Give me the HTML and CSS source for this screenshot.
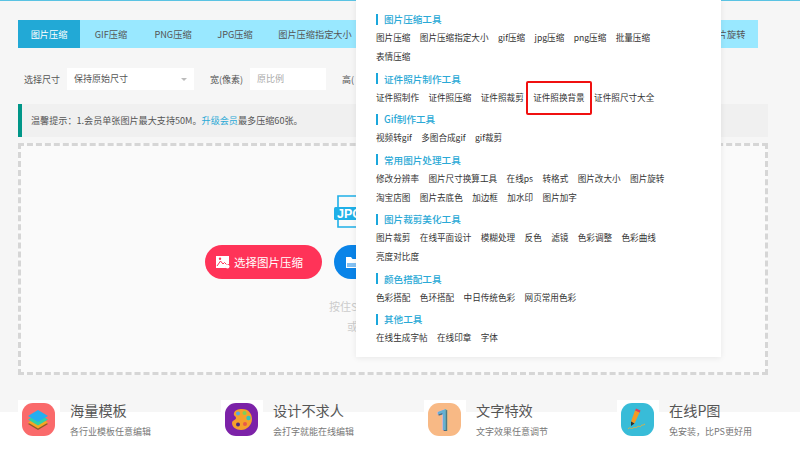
FILE: index.html
```html
<!DOCTYPE html>
<html lang="zh-CN">
<head>
  <meta charset="UTF-8">
  <title>图片压缩</title>
  <link rel="stylesheet" href="styles.css">
</head>
<body>
  <div class="main">
    <div class="tabs">
      <a class="tab active">图片压缩</a>
      <a class="tab">GIF压缩</a>
      <a class="tab">PNG压缩</a>
      <a class="tab">JPG压缩</a>
      <a class="tab tab-wide">图片压缩指定大小</a>
      <a class="tab tab-last">图片旋转</a>
    </div>

    <div class="form-row">
      <label class="form-label">选择尺寸</label>
      <div class="select">保持原始尺寸<i class="select-arrow"></i></div>
      <label class="form-label label-width">宽(像素)</label>
      <div class="input">原比例</div>
      <label class="form-label label-width">高(</label>
    </div>

    <div class="notice">温馨提示：1.会员单张图片最大支持50M。<a class="notice-link">升级会员</a>最多压缩60张。</div>

    <div class="drop">
      <div class="drop-inner">
        <svg class="drop-icon" width="40" height="33" viewBox="0 0 40 33">
          <path d="M4 12V1h22l5 5v26H4v-10" fill="none" stroke="#1fb0e8" stroke-width="1.6"/>
          <rect x="0" y="12" width="38" height="13" rx="1.5" fill="#1fb0e8"/>
          <text x="3" y="23" class="drop-icon-text">JPG</text>
        </svg>
        <div class="btn-row">
          <a class="pill pill-red">
            <svg width="14" height="14" viewBox="0 0 14 14">
              <path d="M0 1h13v8a3 3 0 0 0-3 4H0z" fill="#fff"/>
              <path d="M1 11l3.500-5 2.500 3 1.500-1.500 2 2" fill="none" stroke="#ff3358"/>
              <circle cx="4" cy="3.800" r="1.200" fill="#ff3358"/>
              <circle cx="11.500" cy="11.500" r="2" fill="#fff"/>
            </svg>
            选择图片压缩
          </a>
          <a class="pill pill-blue">
            <svg width="16" height="14" viewBox="0 0 16 14">
              <path d="M1 2h5l1.500 2H15v9H1z" fill="#fff"/>
              <path d="M2 9h12M2 11h12" stroke="#0a84e8"/>
            </svg>
          </a>
        </div>
        <p class="drop-tip tip-first">按住S</p>
        <p class="drop-tip tip-second">或</p>
      </div>
    </div>
  </div>

  <div class="features">
    <div class="feature">
      <div class="feature-icon">
        <svg width="33" height="34" viewBox="0 0 33 34">
          <rect width="33" height="33" rx="11" fill="#fa6a6b"/>
          <path d="M16 15l10 6-10 6-10-6z" fill="#8a5a2a"/>
          <path d="M16 13.500l10 6-10 6-10-6z" fill="#f5a623"/>
          <path d="M16 10.500l10 6-10 6-10-6z" fill="#2fd0a8"/>
          <path d="M16 7l10 6-10 6-10-6z" fill="#23aef0"/>
        </svg>
      </div>
      <div>
        <div class="feature-title">海量模板</div>
        <div class="feature-desc">各行业模板任意编辑</div>
      </div>
    </div>
    <div class="feature">
      <div class="feature-icon">
        <svg width="33" height="34" viewBox="0 0 33 34">
          <rect width="33" height="33" rx="11" fill="#7c22a8"/>
          <path d="M17 6c7 0 10 5 10 10 0 6-5 11-11 11-5 0-9-3-9-7 0-3 4-3 4-5 0-2-3-2-2-5 1-3 4-4 8-4z" fill="#f5a02c"/>
          <circle cx="13" cy="10.500" r="2" fill="#5aa8e0"/>
          <circle cx="19.500" cy="10" r="2" fill="#7ccf5a"/>
          <circle cx="23.500" cy="15" r="2.200" fill="#2fc4c0"/>
          <circle cx="13" cy="21.500" r="2" fill="#4a2a80"/>
          <circle cx="20" cy="21" r="2" fill="#e8584a"/>
        </svg>
      </div>
      <div>
        <div class="feature-title">设计不求人</div>
        <div class="feature-desc">会打字就能在线编辑</div>
      </div>
    </div>
    <div class="feature">
      <div class="feature-icon">
        <svg class="icon-open" width="33" height="34" viewBox="0 0 33 34">
          <rect width="33" height="33" rx="11" fill="#f8b985"/>
          <text x="8" y="28" class="one one-shadow">1</text>
          <text x="7" y="27" class="one">1</text>
        </svg>
      </div>
      <div>
        <div class="feature-title">文字特效</div>
        <div class="feature-desc">文字效果任意调节</div>
      </div>
    </div>
    <div class="feature">
      <div class="feature-icon">
        <svg width="33" height="34" viewBox="0 0 33 34">
          <rect width="33" height="33" rx="11" fill="#38bcd8"/>
          <path d="M15 5.500l4.500 2-1 2.500-4.500-2z" fill="#e0405a"/>
          <path d="M14 7.500l4.500 2-5 11-3.500-2z" fill="#f59a23"/>
          <path d="M10 18.500l3.500 2-3.500 2.500z" fill="#33302c"/>
          <path d="M7 26c2-3 3 1 5-1s2 1 4-1 3 1 4-1 2 0 4-2" fill="none" stroke="#d8b24a"/>
        </svg>
      </div>
      <div>
        <div class="feature-title">在线P图</div>
        <div class="feature-desc">免安装，比PS更好用</div>
      </div>
    </div>
  </div>

  <div class="menu">
    <div class="menu-group">
      <div class="menu-title">图片压缩工具</div>
      <div class="menu-links">
        <a>图片压缩</a><a>图片压缩指定大小</a><a>gif压缩</a><a>jpg压缩</a><a>png压缩</a><a>批量压缩</a><a>表情压缩</a>
      </div>
    </div>
    <div class="menu-group">
      <div class="menu-title">证件照片制作工具</div>
      <div class="menu-links">
        <a>证件照制作</a><a>证件照压缩</a><a>证件照裁剪</a><a class="marked">证件照换背景</a><a>证件照尺寸大全</a>
      </div>
    </div>
    <div class="menu-group">
      <div class="menu-title">Gif制作工具</div>
      <div class="menu-links">
        <a>视频转gif</a><a>多图合成gif</a><a>gif裁剪</a>
      </div>
    </div>
    <div class="menu-group">
      <div class="menu-title">常用图片处理工具</div>
      <div class="menu-links">
        <a>修改分辨率</a><a>图片尺寸换算工具</a><a>在线ps</a><a>转格式</a><a>图片改大小</a><a>图片旋转</a><a>淘宝店图</a><a>图片去底色</a><a>加边框</a><a>加水印</a><a>图片加字</a>
      </div>
    </div>
    <div class="menu-group">
      <div class="menu-title">图片裁剪美化工具</div>
      <div class="menu-links">
        <a>图片裁剪</a><a>在线平面设计</a><a>模糊处理</a><a>反色</a><a>滤镜</a><a>色彩调整</a><a>色彩曲线</a><a>亮度对比度</a>
      </div>
    </div>
    <div class="menu-group">
      <div class="menu-title">颜色搭配工具</div>
      <div class="menu-links">
        <a>色彩搭配</a><a>色环搭配</a><a>中日传统色彩</a><a>网页常用色彩</a>
      </div>
    </div>
    <div class="menu-group">
      <div class="menu-title">其他工具</div>
      <div class="menu-links">
        <a>在线生成字帖</a><a>在线印章</a><a>字体</a>
      </div>
    </div>
  </div>
</body>
</html>
```

FILE: styles.css
```css
* {
  box-sizing: border-box;
}
html, body {
  height: 456px;
  overflow: hidden;
}
body {
  margin: 0;
  position: relative;
  background-color: #fff;
  font-family: "Noto Sans CJK SC", "Noto Sans", sans-serif;
  color: #555;
}
.main {
  height: 412px;
  padding: 19px 32px 0 18px;
  background-color: #f6f6f6;
  border-top: 1px solid #5ac3e3;
}
.tabs {
  display: flex;
  height: 28px;
  margin-right: 10px;
  background-color: #99e8ff;
  font-size: 9.2px;
  line-height: 28px;
}
.tab {
  width: 62px;
  text-align: center;
  color: #555;
}
.tab.active {
  background-color: #22a9d6;
  color: #fff;
}
.tab-wide {
  width: 98px;
}
.tab-last {
  margin-left: auto;
}
.form-row {
  display: flex;
  align-items: center;
  height: 22px;
  margin-top: 20px;
  font-size: 9px;
}
.form-label {
  margin: 0 7px 0 6px;
}
.label-width {
  margin-left: 16px;
}
.select {
  position: relative;
  width: 127px;
  height: 22px;
  padding-left: 7px;
  line-height: 22px;
  background-color: #fff;
}
.select-arrow {
  position: absolute;
  top: 10px;
  right: 7px;
  border-top: 3px solid #bbb;
  border-left: 3px solid transparent;
  border-right: 3px solid transparent;
}
.input {
  width: 76px;
  height: 22px;
  padding-left: 7px;
  line-height: 22px;
  background-color: #fff;
  color: #aaa;
}
.notice {
  height: 33px;
  margin-top: 14px;
  padding-left: 9px;
  border-left: 4px solid #009688;
  background-color: #f0f0f0;
  font-size: 9.1px;
  line-height: 32px;
}
.notice-link {
  color: #2aa9d6;
}
.drop {
  height: 232px;
  margin-top: 6px;
  padding-top: 49px;
  border: 3px dashed #d6d6d6;
  background-color: #fafafa;
}
.drop-inner {
  display: flex;
  flex-direction: column;
  width: 376px;
  margin: 0 auto;
}
.drop-icon {
  display: block;
  margin-left: 129px;
}
.drop-icon-text {
  font-family: "Liberation Sans", sans-serif;
  font-size: 12.5px;
  font-weight: bold;
  fill: #fff;
}
.btn-row {
  display: flex;
  gap: 12px;
  margin-top: 17px;
}
.pill {
  display: flex;
  align-items: center;
  gap: 4px;
  height: 34px;
  padding-left: 11px;
  border-radius: 17px;
  color: #fff;
  font-size: 11.5px;
}
.pill-red {
  width: 117px;
  background-color: #ff3358;
}
.pill-blue {
  flex: 1;
  background-color: #0a84e8;
}
.drop-tip {
  margin: 0;
  height: 20px;
  line-height: 20px;
  font-size: 11px;
  color: #ccc;
}
.tip-first {
  margin-top: 17px;
  padding-left: 124px;
}
.tip-second {
  padding-left: 142px;
}
.features {
  display: grid;
  grid-template-columns: 203px 203px 193px 1fr;
  margin-top: -12px;
  padding-left: 18px;
}
.feature {
  display: flex;
  gap: 10px;
}
.feature-icon {
  width: 42px;
  height: 42px;
  padding: 3px 0 0 4px;
  background-color: #fff;
}
.feature-icon svg {
  display: block;
}
.icon-open {
  overflow: visible;
}
.feature-title {
  font-size: 14.2px;
  line-height: 20px;
  color: #555;
}
.feature-desc {
  margin-top: 5px;
  font-size: 9px;
  line-height: 14px;
  color: #777;
}
.one {
  font-family: Roboto, sans-serif;
  font-size: 29px;
  font-weight: 500;
  fill: #66b0d2;
}
.one-shadow {
  fill: #4a6c84;
}
.menu {
  position: absolute;
  top: 0;
  left: 356px;
  width: 365px;
  height: 356.5px;
  padding: 10px 50px 0 20px;
  background-color: #fff;
  box-shadow: 0 1px 6px rgba(0,0,0,0.08);
}
.menu-group {
  margin-bottom: 3.5px;
}
.menu-title {
  display: flex;
  align-items: center;
  gap: 6px;
  height: 18px;
  line-height: 18px;
  font-size: 9.6px;
  font-weight: 500;
  color: #2aa9d6;
}
.menu-title::before {
  content: "";
  width: 2px;
  height: 11px;
  background-color: #1aa7dc;
}
.menu-links {
  display: flex;
  flex-wrap: wrap;
  column-gap: 9.4px;
  font-size: 8.6px;
  line-height: 19px;
  color: #333;
}
.marked {
  position: relative;
}
.marked::after {
  content: "";
  position: absolute;
  top: -7px;
  bottom: -8px;
  left: -7px;
  right: -7px;
  border: 2px solid #f01010;
  border-radius: 2px;
}
```
